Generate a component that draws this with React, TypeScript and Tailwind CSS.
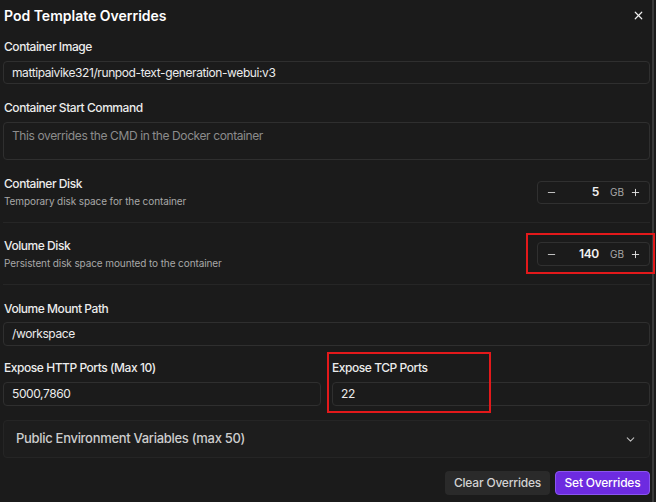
import React from "react";
import { X, ChevronDown, Minus, Plus } from "lucide-react";

const inputCls =
  "w-full rounded-[4px] border border-[#2f2f2f] bg-[#1b1b1b] px-[8px] text-[12px] tracking-[-0.4px] text-[#ececec] flex items-center";

const Label = ({ children }: { children: React.ReactNode }) => (
  <div className="h-[16px] leading-[16px] text-[12px] tracking-[-0.45px] font-medium text-[#ececec]">{children}</div>
);

const Stepper = ({ value, h }: { value: string; h: string }) => (
  <div className={`w-[113px] ${h} rounded-[4px] border border-[#303030] flex items-center pl-[8px] pr-[8px] text-[#e6e6e6]`}>
    <Minus size={11} strokeWidth={2} className="text-[#cfcfcf]" />
    <span className="flex-1 text-right text-[12px] font-semibold tracking-[-0.3px] text-[#f2f2f2]">{value}</span>
    <span className="ml-[11px] text-[10px] text-[#a9a9a9]">GB</span>
    <Plus size={11} strokeWidth={2} className="ml-[6px] text-[#e6e6e6]" />
  </div>
);

export default function App() {
  return (
    <div
      className="relative w-[656px] h-[502px] bg-[#1b1b1b] overflow-hidden"
      style={{ fontFamily: "Inter, 'Noto Sans', sans-serif" }}
    >
      <div className="w-[654px] h-full pl-[3px] pr-[2px] border-r-2 border-[#3a3a3a]">
        {/* header */}
        <div className="h-[30px] flex items-center justify-between pl-[1px] pr-[5px]">
          <h1 className="text-[14px] font-semibold text-white">Pod Template Overrides</h1>
          <X size={13} strokeWidth={2.2} className="text-[#f0f0f0]" />
        </div>

        <div className="mt-[9px] pl-[1px]">
          <Label>Container Image</Label>
        </div>
        <div className={`mt-[6px] h-[23px] ${inputCls}`}>mattipaivike321/runpod-text-generation-webui:v3</div>

        <div className="mt-[16px] pl-[1px]">
          <Label>Container Start Command</Label>
        </div>
        <div className="mt-[6px] h-[38px] w-full rounded-[4px] border border-[#2f2f2f] px-[8px] pt-[4px] text-[12px] tracking-[-0.4px] text-[#8c8c8c]">
          This overrides the CMD in the Docker container
        </div>

        {/* container disk */}
        <div className="pt-[16px] pb-[14px] pl-[1px] flex items-center justify-between border-b border-[#262626]">
          <div className="flex flex-col gap-[2px]">
            <Label>Container Disk</Label>
            <div className="h-[14px] leading-[14px] text-[10px] tracking-[-0.1px] text-[#a8a8a8]">Temporary disk space for the container</div>
          </div>
          <Stepper value="5" h="h-[23px]" />
        </div>

        {/* volume disk */}
        <div className="pt-[15px] pb-[14px] pl-[1px] flex items-center justify-between border-b border-[#262626]">
          <div className="flex flex-col gap-[2px]">
            <Label>Volume Disk</Label>
            <div className="h-[14px] leading-[14px] text-[10px] tracking-[-0.1px] text-[#a8a8a8]">Persistent disk space mounted to the container</div>
          </div>
          <Stepper value="140" h="h-[24px]" />
        </div>

        <div className="mt-[16px] pl-[1px]">
          <Label>Volume Mount Path</Label>
        </div>
        <div className={`mt-[5px] h-[24px] ${inputCls}`}>/workspace</div>

        <div className="mt-[14px] grid grid-cols-2 gap-x-[11px]">
          <div>
            <div className="pl-[1px]">
              <Label>Expose HTTP Ports (Max 10)</Label>
            </div>
            <div className={`mt-[6px] h-[24px] ${inputCls}`}>5000,7860</div>
          </div>
          <div>
            <Label>Expose TCP Ports</Label>
            <div className={`mt-[6px] h-[24px] ${inputCls}`}>22</div>
          </div>
        </div>

        <div className="mt-[14px] h-[38px] rounded-[4px] border border-[#252525] bg-[#1d1d1d] flex items-center justify-between pl-[12px] pr-[12px]">
          <span className="text-[13px] font-medium tracking-[-0.3px] text-[#cdcdcd]">Public Environment Variables (max 50)</span>
          <ChevronDown size={13} strokeWidth={2} className="text-[#bdbdbd]" />
        </div>

        <div className="mt-[13px] flex justify-end gap-[5px]">
          <button className="h-[24px] w-[105px] rounded-[4px] bg-[#2a2a2a] text-[12px] font-medium tracking-[-0.2px] text-[#d2d2d2]">
            Clear Overrides
          </button>
          <button className="h-[24px] w-[95px] rounded-[4px] border border-[#8a55ee] bg-[#6d2be0] text-[12px] font-medium tracking-[-0.2px] text-white">
            Set Overrides
          </button>
        </div>
      </div>

      {/* annotation boxes */}
      <div className="absolute left-[526px] top-[233px] w-[129px] h-[41px] border-2 border-[#e3191b] pointer-events-none" />
      <div className="absolute left-[327px] top-[352px] w-[164px] h-[61px] border-2 border-[#e3191b] pointer-events-none" />
    </div>
  );
}
